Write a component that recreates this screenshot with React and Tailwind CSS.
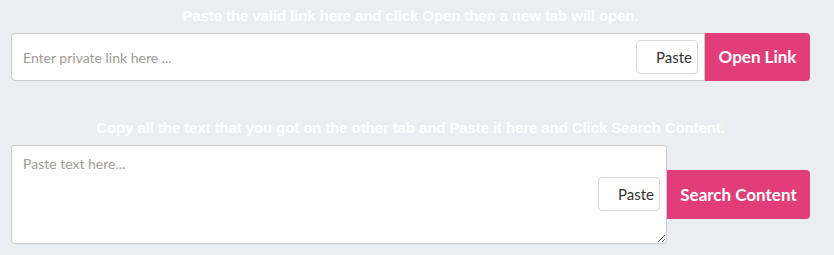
import { useState } from 'react';

const bodyFont = { fontFamily: 'Lato, "Open Sans", "Liberation Sans", sans-serif' };
const headFont = { fontFamily: '"Liberation Sans", Arial, sans-serif' };

export default function App() {
  const [link, setLink] = useState('');
  const [text, setText] = useState('');

  return (
    <div className="min-h-[255px] w-full bg-[#ebeef0] px-[11px] pt-[6px]" style={bodyFont}>
      {/* open link */}
      <p className="w-[799px] text-center text-[15px] font-bold leading-[19px] tracking-[-0.1px] text-white" style={headFont}>
        Paste the valid link here and click Open then a new tab will open.
      </p>
      <div className="mt-[8px] flex h-[48px] w-[799px]">
        <div className="flex flex-1 items-center rounded-l-[4px] border border-[#ccc] bg-white pl-[11px] pr-[6px]">
          <input
            value={link}
            onChange={(e) => setLink(e.target.value)}
            placeholder="Enter private link here ..."
            className="flex-1 bg-transparent text-[14px] text-[#555] outline-none placeholder:text-[#a09b97]"
            style={bodyFont}
          />
          <button className="flex h-[34px] w-[62px] items-center justify-end rounded-[4px] border border-[#d6d6d6] bg-white pr-[5px] text-[15px] text-[#333]">
            Paste
          </button>
        </div>
        <button className="w-[105px] rounded-r-[4px] bg-[#e03d79] text-[17px] font-bold text-white">
          Open Link
        </button>
      </div>

      {/* search content */}
      <p className="mt-[37px] w-[799px] text-center text-[15px] font-bold leading-[19px] tracking-[-0.1px] text-white" style={headFont}>
        Copy all the text that you got on the other tab and Paste it here and Click Search Content.
      </p>
      <div className="mt-[8px] flex w-[799px] items-center">
        <div className="relative h-[99px] w-[656px]">
          <textarea
            value={text}
            onChange={(e) => setText(e.target.value)}
            placeholder="Paste text here..."
            className="block h-full w-full resize-y rounded-[3px] border border-[#ccc] bg-white px-[11px] pt-[7px] text-[14px] text-[#555] outline-none placeholder:text-[#a09b97]"
            style={bodyFont}
          />
          <button className="absolute right-[7px] top-[32px] flex h-[34px] w-[62px] items-center justify-end rounded-[4px] border border-[#d6d6d6] bg-white pr-[5px] text-[15px] text-[#333]">
            Paste
          </button>
        </div>
        <button className="h-[49px] w-[143px] rounded-r-[4px] bg-[#e03d79] text-[17px] font-bold text-white">
          Search Content
        </button>
      </div>
    </div>
  );
}
